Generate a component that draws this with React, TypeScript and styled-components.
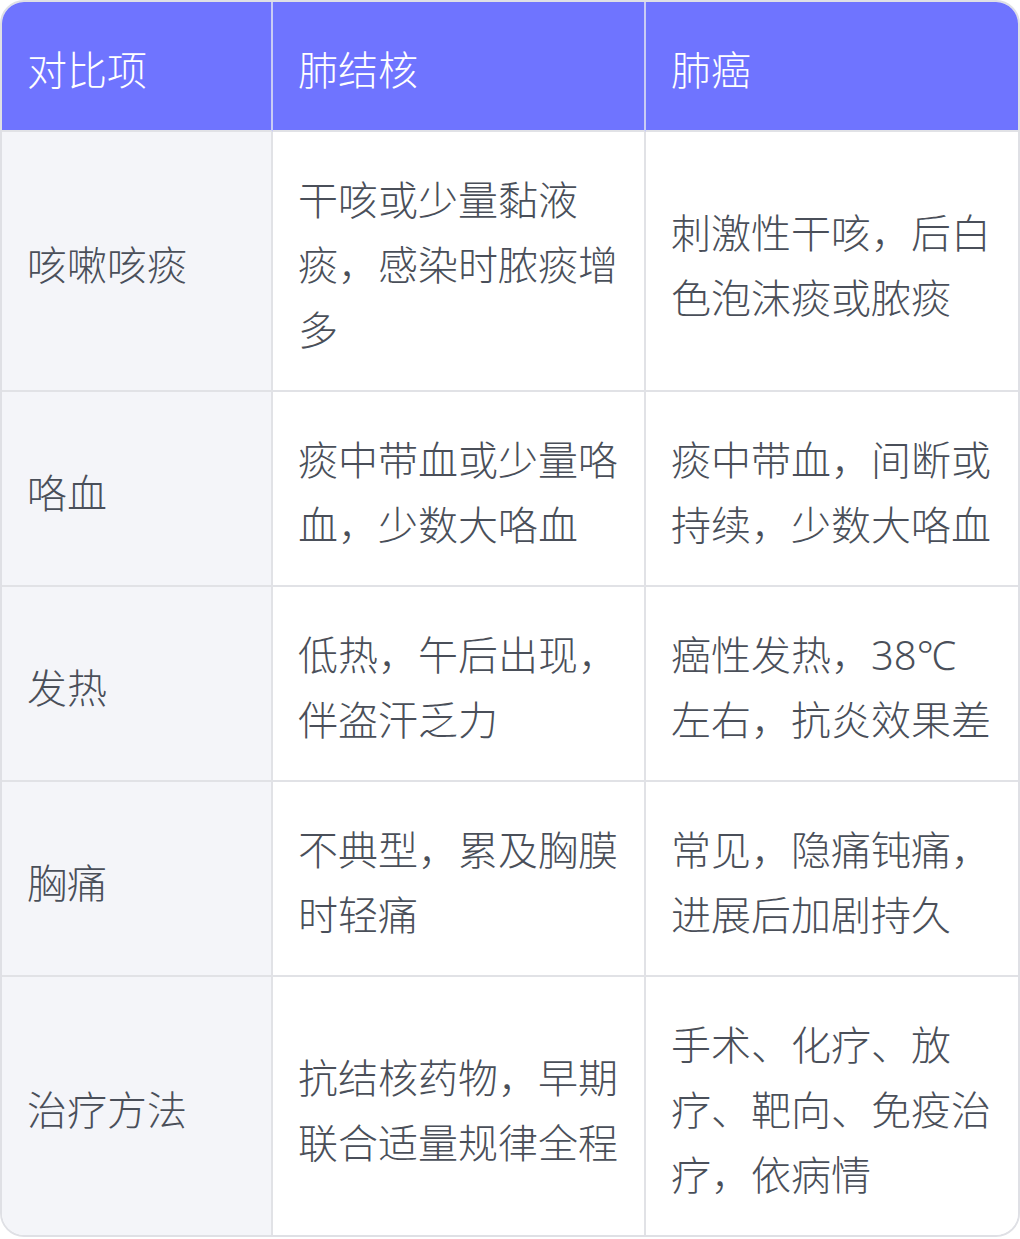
import React from "react";
import styled, { createGlobalStyle } from "styled-components";

const GlobalStyle = createGlobalStyle`
  html, body { margin: 0; padding: 0; background: #ffffff; }
  body { font-family: "Noto Sans", "Noto Sans CJK SC", sans-serif; }
`;

const Table = styled.div`
  box-sizing: border-box;
  width: 1020px;
  border: 2px solid #dfe0e5;
  border-radius: 24px;
  overflow: hidden;
  display: grid;
  grid-template-columns: 271px 373px 372px;
  background: #ffffff;
`;

const Cell = styled.div<{ $head?: boolean; $label?: boolean; $lastCol?: boolean; $lastRow?: boolean }>`
  box-sizing: border-box;
  display: flex;
  align-items: center;
  padding: 35px 24px 28px 25px;
  font-family: "Noto Sans", "Noto Sans CJK SC", sans-serif;
  font-size: 40px;
  font-weight: 300;
  line-height: 65px;
  color: ${(p) => (p.$head ? "#ffffff" : "#4a4f59")};
  background: ${(p) => (p.$head ? "#6f74ff" : p.$label ? "#f4f5f9" : "#ffffff")};
  border-right: ${(p) => (p.$lastCol ? "none" : p.$head ? "2px solid #c9cbf5" : "2px solid #e1e2e6")};
  border-bottom: ${(p) => (p.$lastRow ? "none" : "2px solid #e1e2e6")};
`;

const head = ["对比项", "肺结核", "肺癌"];

const rows: [string, string, string][] = [
  ["咳嗽咳痰", "干咳或少量黏液痰，感染时脓痰增多", "刺激性干咳，后白色泡沫痰或脓痰"],
  ["咯血", "痰中带血或少量咯血，少数大咯血", "痰中带血，间断或持续，少数大咯血"],
  ["发热", "低热，午后出现，伴盗汗乏力", "癌性发热，38℃左右，抗炎效果差"],
  ["胸痛", "不典型，累及胸膜时轻痛", "常见，隐痛钝痛，进展后加剧持久"],
  ["治疗方法", "抗结核药物，早期联合适量规律全程", "手术、化疗、放疗、靶向、免疫治疗，依病情"],
];

export default function App() {
  return (
    <>
      <GlobalStyle />
      <Table>
        {head.map((h, i) => (
          <Cell key={h} $head $lastCol={i === 2}>
            {h}
          </Cell>
        ))}
        {rows.map((r, ri) =>
          r.map((c, ci) => (
            <Cell
              key={`${ri}-${ci}`}
              $label={ci === 0}
              $lastCol={ci === 2}
              $lastRow={ri === rows.length - 1}
            >
              {c}
            </Cell>
          ))
        )}
      </Table>
    </>
  );
}
